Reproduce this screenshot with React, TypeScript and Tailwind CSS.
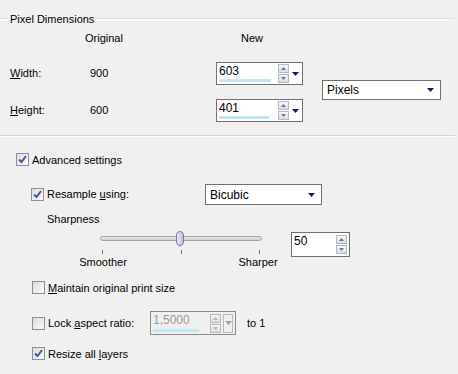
import React from 'react'

const Check = ({ checked }: { checked?: boolean }) => (
  <span className="w-[13px] h-[13px] shrink-0 border border-[#8e8f8f] bg-gradient-to-br from-[#dcdcdc] to-[#fbfbfb] flex items-center justify-center">
    {checked && (
      <svg width="9" height="9" viewBox="0 0 9 9">
        <path d="M1 4.5 L3.4 7 L8 1.2" fill="none" stroke="#3a5b9c" strokeWidth="1.9" />
      </svg>
    )}
  </span>
)

const NavyArrow = ({ gray }: { gray?: boolean }) => (
  <svg width="7" height="4" viewBox="0 0 7 4">
    <path d="M0 0 H7 L3.5 4 Z" fill={gray ? '#a0a0a0' : '#0a1e5e'} />
  </svg>
)

const SpinBtn = ({ up, gray }: { up?: boolean; gray?: boolean }) => (
  <span className="w-[11px] h-[9px] border border-[#b4bac2] bg-gradient-to-b from-[#f7f7f7] to-[#dedede] flex items-center justify-center">
    <svg width="5" height="3" viewBox="0 0 5 3">
      <path d={up ? 'M0 3 H5 L2.5 0 Z' : 'M0 0 H5 L2.5 3 Z'} fill={gray ? '#b8b8b8' : '#5b7ac8'} />
    </svg>
  </span>
)

function SpinBox({
  value,
  w,
  h,
  bar,
  menu,
  disabled,
}: {
  value: string
  w: string
  h: string
  bar?: string
  menu?: boolean
  disabled?: boolean
}) {
  return (
    <div className={`${w} ${h} shrink-0 border ${disabled ? 'border-[#8a8a8a] bg-[#f0f0f0]' : 'border-[#707070] bg-white'} flex`}>
      <div className="flex-1 flex flex-col pl-[2px] pt-[2px]">
        <span className={disabled ? 'text-[#9a9a9a] text-[12px]' : 'text-[12px]'}>{value}</span>
        <span className="flex-1" />
        {bar && <span className={`${bar} h-[3px] bg-[#c6e4f8] mb-[2px]`} />}
      </div>
      <div className="flex items-center gap-[2px] pr-[2px]">
        <div className="flex flex-col gap-[1px]">
          <SpinBtn up gray={disabled} />
          <SpinBtn gray={disabled} />
        </div>
        {menu &&
          (disabled ? (
            <span className="w-[10px] h-[19px] border border-[#b4bac2] flex items-center justify-center">
              <NavyArrow gray />
            </span>
          ) : (
            <span className="w-[9px] flex justify-center">
              <NavyArrow />
            </span>
          ))}
      </div>
    </div>
  )
}

const Combo = ({ value, w, h }: { value: string; w: string; h: string }) => (
  <div className={`${w} ${h} shrink-0 border border-[#707070] bg-white flex items-center pl-[4px] pr-[6px]`}>
    <span className="flex-1 text-[12px]">{value}</span>
    <NavyArrow />
  </div>
)

export default function App() {
  return (
    <div className="w-[458px] h-[374px] overflow-hidden bg-[#f0f0f0] text-[11px] leading-[12px] text-black font-['Liberation_Sans',Arial,sans-serif]">
      {/* group header */}
      <div className="mt-[13px] h-[12px] flex items-center">
        <span className="w-[8px] h-[2px] border-t border-[#d5dfe5] border-b border-b-white" />
        <span className="px-[2px]">Pixel Dimensions</span>
        <span className="flex-1 h-[2px] border-t border-[#d5dfe5] border-b border-b-white mr-[3px]" />
      </div>

      <div className="mt-[7px] h-[12px] flex">
        <span className="w-[156px] pl-[85px]">Original</span>
        <span className="pl-[85px]">New</span>
      </div>

      <div className="flex">
        <div className="flex flex-col">
          <div className="mt-[18px] h-[23px] flex items-center">
            <span className="w-[90px] pl-[10px] -mt-[2px]">
              <u>W</u>idth:
            </span>
            <span className="w-[126px] -mt-[2px]">900</span>
            <SpinBox value="603" w="w-[87px]" h="h-[23px]" bar="w-[52px]" menu />
          </div>
          <div className="mt-[14px] h-[23px] flex items-center">
            <span className="w-[90px] pl-[10px] -mt-[2px]">
              <u>H</u>eight:
            </span>
            <span className="w-[126px] -mt-[2px]">600</span>
            <SpinBox value="401" w="w-[87px]" h="h-[23px]" bar="w-[50px]" menu />
          </div>
        </div>
        <div className="mt-[36px] ml-[19px]">
          <Combo value="Pixels" w="w-[119px]" h="h-[20px]" />
        </div>
      </div>

      <div className="mt-[13px] h-[2px] border-t border-[#d5d5d5] border-b border-b-white mr-[3px]" />

      {/* advanced */}
      <div className="mt-[16px] h-[13px] flex items-center pl-[16px]">
        <Check checked />
        <span className="ml-[3px]">Advanced settings</span>
      </div>

      <div className="mt-[18px] h-[21px] flex items-center pl-[31px]">
        <div className="w-[174px] flex items-center">
          <Check checked />
          <span className="ml-[3px] -mt-[2px]">
            Resample <u>u</u>sing:
          </span>
        </div>
        <Combo value="Bicubic" w="w-[117px]" h="h-[21px]" />
      </div>

      <div className="mt-[8px] h-[13px] pl-[47px]">Sharpness</div>

      <div className="flex items-start">
        <div className="ml-[100px] w-[162px] flex flex-col">
          <div className="relative h-[16px] mt-[5px]">
            <span className="absolute inset-x-0 top-[5px] h-[5px] rounded-full border border-[#a3a3a3] bg-gradient-to-b from-[#e8e8e8] to-[#cfcfcf]" />
            <span className="absolute left-[76px] top-0 w-[8px] h-[15px] rounded-[4px] border border-[#707b97] bg-gradient-to-r from-[#e9ecf4] to-[#b9c0d4]" />
          </div>
          <div className="mt-[3px] h-[4px] flex justify-between px-[2px]">
            <span className="w-px h-[4px] bg-[#707070]" />
            <span className="w-px h-[4px] bg-[#707070]" />
            <span className="w-px h-[4px] bg-[#707070]" />
          </div>
          <div className="mt-[2px] h-[12px] flex justify-between -ml-[27px] -mr-[26px]">
            <span className="w-[60px] text-center">Smoother</span>
            <span className="w-[60px] text-center">Sharper</span>
          </div>
        </div>
        <div className="ml-[29px] mt-[6px]">
          <SpinBox value="50" w="w-[59px]" h="h-[25px]" />
        </div>
      </div>

      <div className="mt-[13px] h-[13px] flex items-center pl-[32px]">
        <Check />
        <span className="ml-[3px]">
          <u>M</u>aintain original print size
        </span>
      </div>

      <div className="mt-[17px] h-[24px] flex items-center pl-[32px]">
        <div className="w-[118px] flex items-center">
          <Check />
          <span className="ml-[3px]">
            Lock <u>a</u>spect ratio:
          </span>
        </div>
        <SpinBox value="1,5000" w="w-[86px]" h="h-[24px]" bar="w-[46px]" menu disabled />
        <span className="ml-[11px]">to 1</span>
      </div>

      <div className="mt-[12px] h-[13px] flex items-center pl-[32px]">
        <Check checked />
        <span className="ml-[3px]">
          Resize all <u>l</u>ayers
        </span>
      </div>
    </div>
  )
}
